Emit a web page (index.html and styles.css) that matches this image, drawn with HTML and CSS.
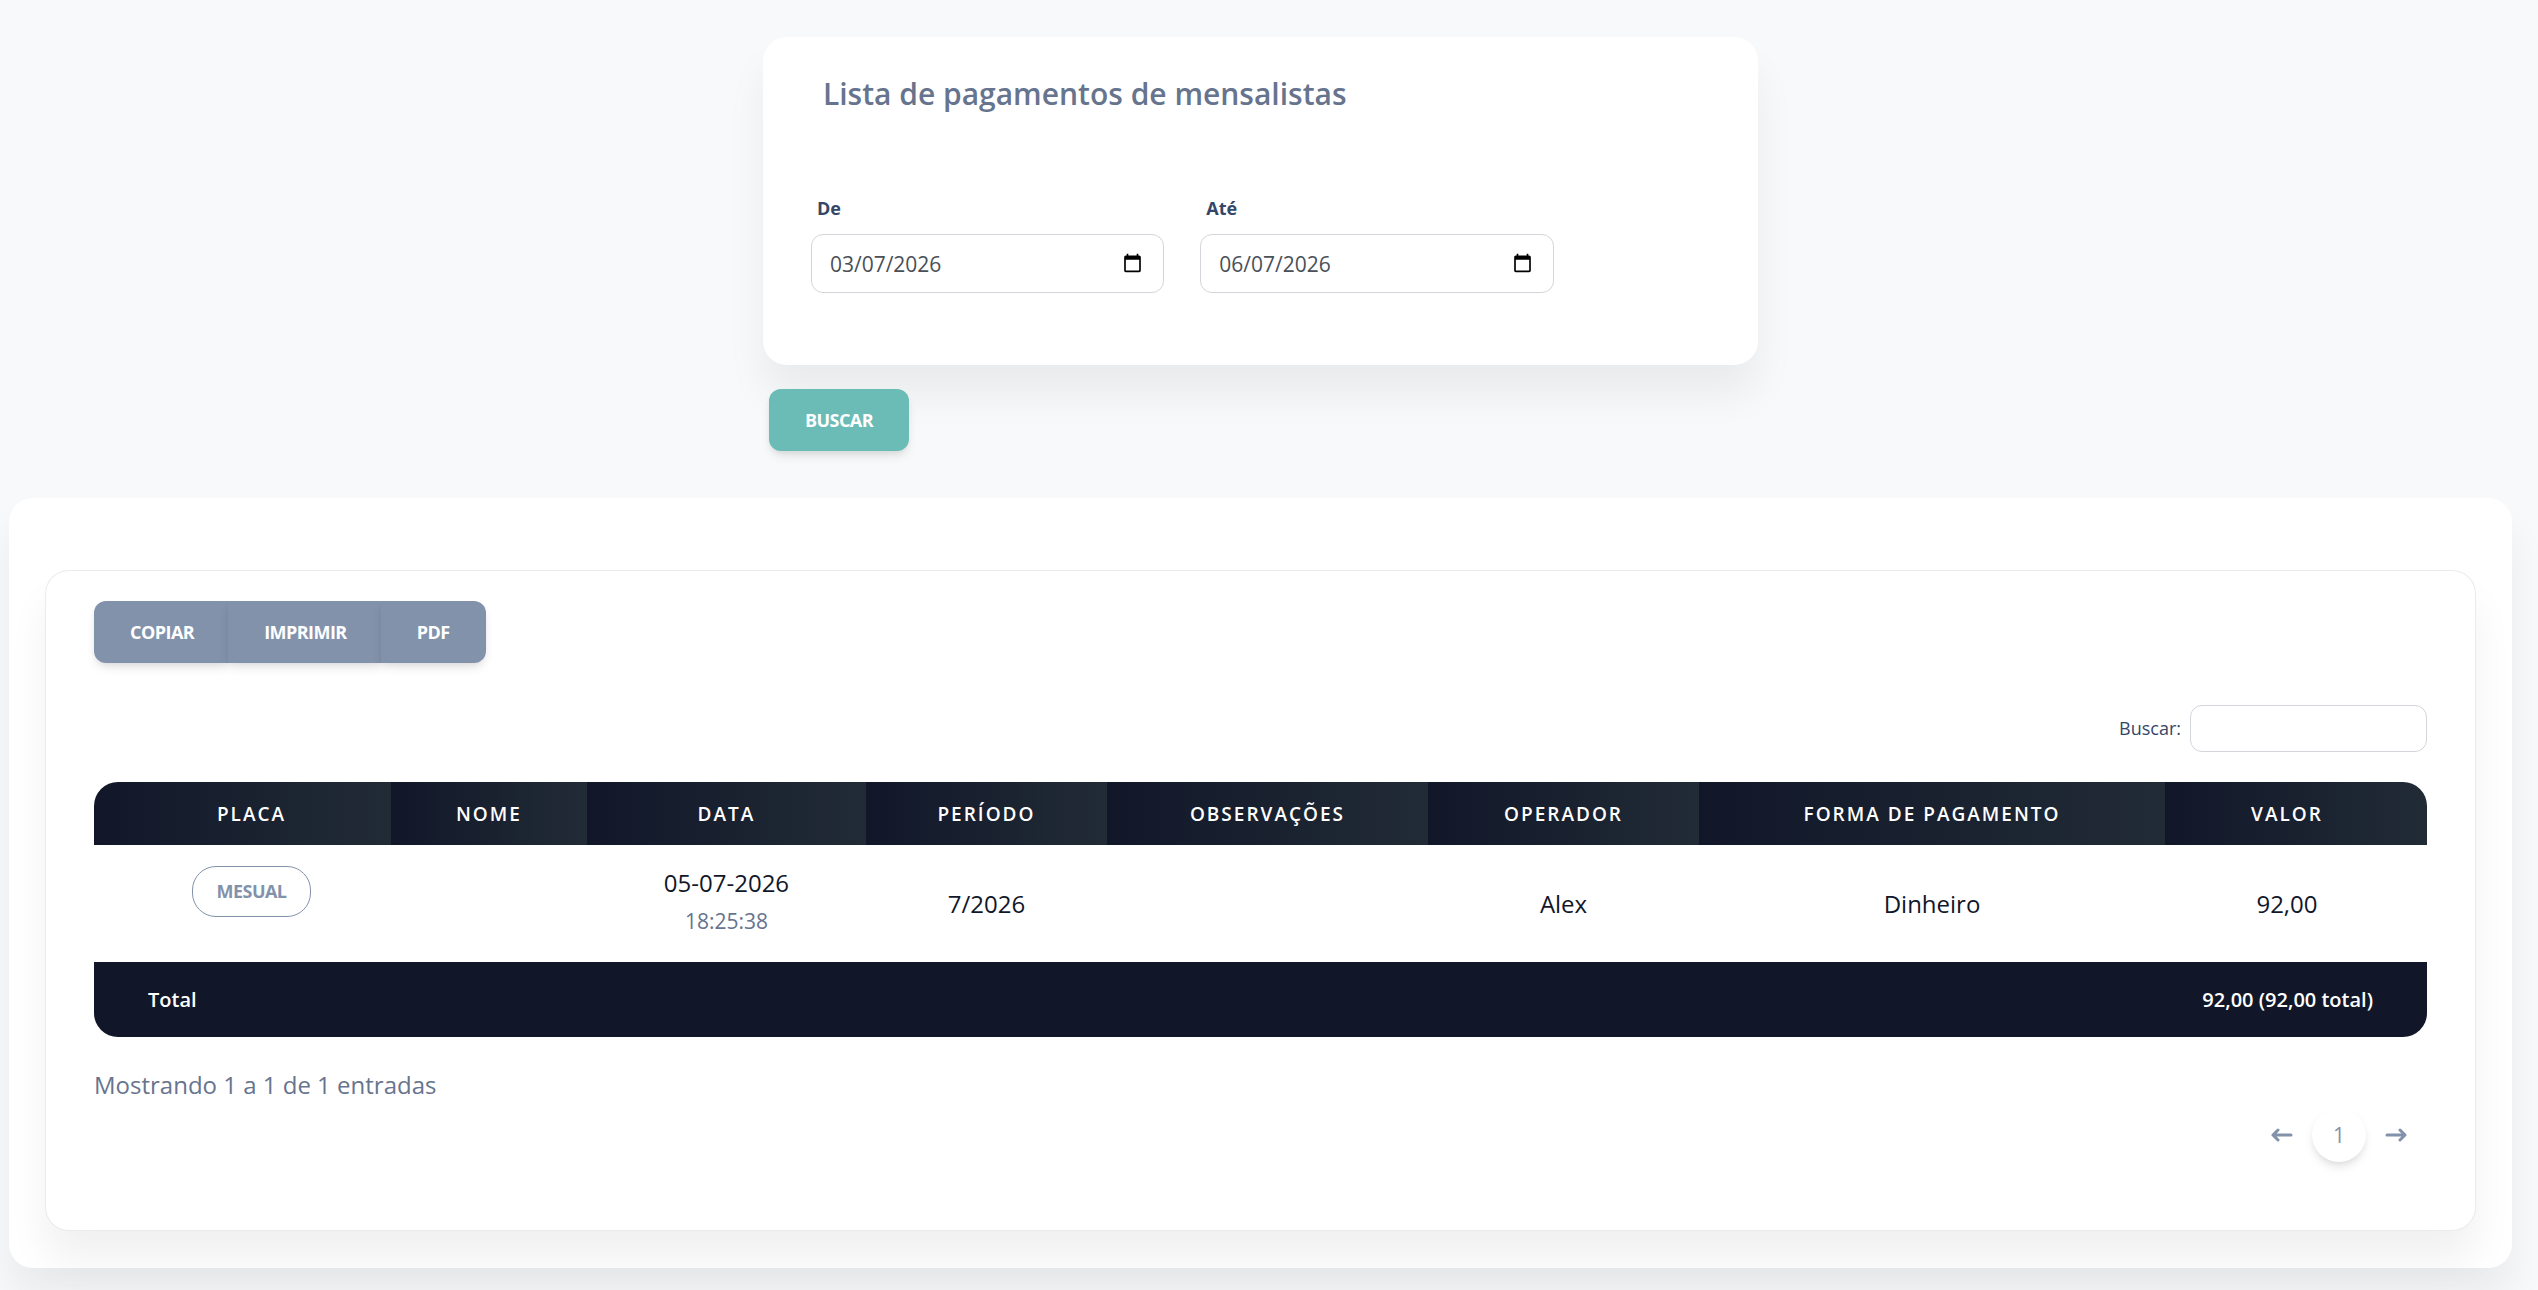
FILE: index.html
```html
<!DOCTYPE html>
<html lang="pt-BR">
<head>
<meta charset="utf-8">
<meta name="viewport" content="width=device-width, initial-scale=1">
<title>Lista de pagamentos de mensalistas</title>
<link rel="stylesheet" href="styles.css">
</head>
<body>
<main class="page">
  <form class="filter">
    <section class="card filter-card">
      <h1 class="title">Lista de pagamentos de mensalistas</h1>
      <div class="fields">
        <div class="field">
          <label class="field-label" for="from">De</label>
          <input class="input date" type="date" id="from" value="2026-03-07">
        </div>
        <div class="field">
          <label class="field-label" for="to">Até</label>
          <input class="input date" type="date" id="to" value="2026-06-07">
        </div>
      </div>
    </section>
    <button class="btn btn-primary" type="button">BUSCAR</button>
  </form>

  <section class="card results">
    <div class="card panel">
      <div class="btn-group">
        <button class="btn" type="button">COPIAR</button>
        <button class="btn" type="button">IMPRIMIR</button>
        <button class="btn" type="button">PDF</button>
      </div>
      <div class="search">
        <label for="search">Buscar:</label>
        <input class="input search-input" type="search" id="search">
      </div>
      <table class="table">
        <colgroup>
          <col class="c-placa"><col class="c-nome"><col class="c-data"><col class="c-periodo">
          <col class="c-obs"><col class="c-operador"><col class="c-forma"><col class="c-valor">
        </colgroup>
        <thead>
          <tr><th class="first">PLACA</th><th>NOME</th><th>DATA</th><th>PERÍODO</th><th>OBSERVAÇÕES</th><th>OPERADOR</th><th>FORMA DE PAGAMENTO</th><th class="last">VALOR</th></tr>
        </thead>
        <tbody>
          <tr>
            <td class="first top"><span class="badge">MESUAL</span></td>
            <td></td>
            <td>05-07-2026<span class="time">18:25:38</span></td>
            <td>7/2026</td>
            <td></td>
            <td>Alex</td>
            <td>Dinheiro</td>
            <td class="last">92,00</td>
          </tr>
        </tbody>
        <tfoot>
          <tr><th class="total" colspan="6">Total</th><th class="sum" colspan="2">92,00 (92,00 total)</th></tr>
        </tfoot>
      </table>
      <p class="info">Mostrando 1 a 1 de 1 entradas</p>
      <nav class="pages" aria-label="Paginação">
        <a class="page-link" href="#" aria-label="Anterior">
          <svg class="arrow" viewBox="0 0 22 14"><path d="M20 7H2M7 2L2 7l5 5"/></svg>
        </a>
        <a class="page-link current" href="#">1</a>
        <a class="page-link" href="#" aria-label="Próxima">
          <svg class="arrow" viewBox="0 0 22 14"><path d="M2 7h18M15 2l5 5-5 5"/></svg>
        </a>
      </nav>
    </div>
  </section>
</main>
</body>
</html>
```
FILE: styles.css
```css
* { box-sizing: border-box; }

body {
  margin: 0;
  min-height: 100vh;
  background: #f8f9fb;
  color: #67748e;
  font: 400 24px/36px "Open Sans", sans-serif;
}

.page { padding: 37px 26px 23px 9px; }

.card {
  background: #fff;
  border-radius: 24px;
  box-shadow: 0 30px 40px rgba(0, 0, 0, .06);
}

/* Filter */
.filter { width: calc(40% - 6px); margin: 0 auto; }
.filter-card { padding: 36px 48px 72px; }
.title { margin: 0 0 80px; padding: 0 12px; font-size: 30px; line-height: 42px; font-weight: 600; }
.fields { display: grid; grid-template-columns: 1fr 1fr 13.4%; column-gap: 36px; }
.field { display: flex; flex-direction: column; gap: 12px; }
.field-label { padding-left: 6px; color: #344767; font-size: 18px; line-height: 27px; font-weight: 700; }

.input {
  border: 1px solid #d2d6da;
  border-radius: 12px;
  background: #fff;
  color: #495057;
  font: 400 21px/30px "Open Sans", sans-serif;
}
.date { height: 59px; width: 100%; padding: 0 18px; }
.date::-webkit-datetime-edit-day-field,
.date::-webkit-datetime-edit-month-field,
.date::-webkit-datetime-edit-year-field { padding: 0; }

.btn {
  height: 62px;
  padding: 0 36px;
  border: 0;
  border-radius: 12px;
  background: #8392ab;
  color: #fff;
  font: 700 18px/27px "Open Sans", sans-serif;
  letter-spacing: -.03em;
  box-shadow: 0 6px 11px -2px rgba(0, 0, 0, .11), 0 3px 6px -2px rgba(0, 0, 0, .07);
}
.btn-primary { margin: 24px 0 0 6px; background: #6bbbb6; }

/* Results */
.results { margin-top: 47px; padding: 72px 36px 37px; }
.panel { padding: 30px 48px 68px; border: 1px solid rgba(0, 0, 0, .08); }
.btn-group { display: flex; }
.btn-group .btn { border-radius: 0; margin-left: -2px; }
.btn-group .btn:first-child { margin-left: 0; border-radius: 12px 0 0 12px; }
.btn-group .btn:last-child { border-radius: 0 12px 12px 0; }

.search { display: flex; justify-content: flex-end; align-items: center; gap: 9px; margin: 42px 0 30px; color: #344767; font-size: 18px; line-height: 27px; }
.search-input { width: 237px; height: 47px; padding: 0 12px; }

.table { width: 100%; table-layout: fixed; border-collapse: separate; border-spacing: 0; border-radius: 24px; overflow: hidden; text-align: center; }
.c-placa { width: 12.73%; }
.c-nome { width: 8.4%; }
.c-data { width: 11.96%; }
.c-periodo { width: 10.33%; }
.c-obs { width: 13.76%; }
.c-operador { width: 11.62%; }
.c-forma { width: 19.97%; }
.c-valor { width: 11.23%; }

thead th {
  height: 63px;
  padding: 0;
  background: linear-gradient(90deg, #111729, #212b36);
  color: #fff;
  font-size: 19px;
  line-height: 30px;
  font-weight: 600;
  letter-spacing: 2px;
}
td { height: 117px; padding: 0; color: #111729; }
.table .first { padding-left: 18px; }
.table .last { padding-right: 18px; }
.top { padding-top: 21px; vertical-align: top; }
.badge { display: inline-block; height: 51px; padding: 11px 24px; border: 1px solid #8392ab; border-radius: 24px; color: #8392ab; font-size: 18px; line-height: 27px; font-weight: 700; letter-spacing: -.03em; }
.time { display: block; color: #67748e; font-size: 21px; line-height: 41px; }
tfoot th { height: 75px; padding: 0 54px; background: #111729; color: #fff; font-size: 20px; line-height: 30px; font-weight: 650; }
.total { text-align: left; }
.sum { text-align: right; }

.info { margin: 30px 0 5px; }
.pages { display: flex; justify-content: flex-end; align-items: center; gap: 3px; padding-right: 4px; }
.page-link { display: flex; align-items: center; justify-content: center; width: 54px; height: 54px; border-radius: 50%; color: #8392ab; font-size: 21px; line-height: 30px; text-decoration: none; }
.current { box-shadow: 0 6px 11px -2px rgba(0, 0, 0, .11), 0 3px 6px -2px rgba(0, 0, 0, .07); background: #fff; }
.arrow { width: 22px; height: 14px; fill: none; stroke: currentColor; stroke-width: 3; stroke-linecap: round; stroke-linejoin: round; }
```
